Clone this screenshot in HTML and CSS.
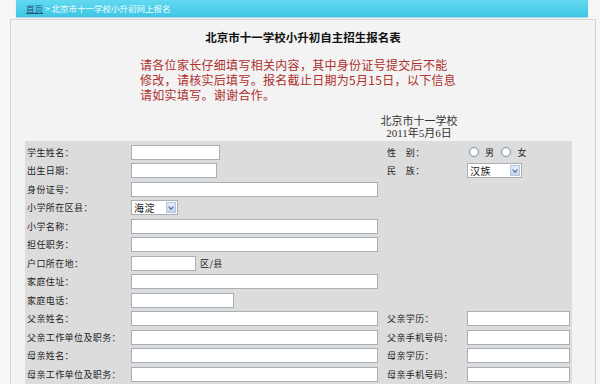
FILE: index.html
```html
<!DOCTYPE html>
<html lang="zh-CN">
<head>
  <meta charset="UTF-8" />
  <title>北京市十一学校小升初网上报名</title>
  <link rel="stylesheet" href="styles.css">
</head>
<body>

  <!-- 导航条 -->
  <div class="crumb"><a href="#">首页</a> &gt; 北京市十一学校小升初网上报名</div>

  <div class="panel">
    <h1 class="title">北京市十一学校小升初自主招生报名表</h1>

    <p class="notice">请各位家长仔细填写相关内容，其中身份证号提交后不能修改，请核实后填写。报名截止日期为5月15日，以下信息请如实填写。谢谢合作。</p>

    <div class="sign">
      <div>北京市十一学校</div>
      <div>2011年5月6日</div>
    </div>

    <!-- 报名表 -->
    <div class="form">
      <div class="row">
        <span class="lab">学生姓名：</span>
        <span class="field"><span class="box w89"></span></span>
        <span class="lab2">性　别：</span>
        <span class="field2">
          <span class="radio"></span><span class="opt">男</span>
          <span class="radio"></span><span class="opt">女</span>
        </span>
      </div>
      <div class="row">
        <span class="lab">出生日期：</span>
        <span class="field"><span class="box w86"></span></span>
        <span class="lab2">民　族：</span>
        <span class="field2"><span class="select w53">汉族<i class="arrow"></i></span></span>
      </div>
      <div class="row">
        <span class="lab">身份证号：</span>
        <span class="field"><span class="box wide"></span></span>
      </div>
      <div class="row">
        <span class="lab">小学所在区县：</span>
        <span class="field"><span class="select w45">海淀<i class="arrow"></i></span></span>
      </div>
      <div class="row">
        <span class="lab">小学名称：</span>
        <span class="field"><span class="box wide"></span></span>
      </div>
      <div class="row">
        <span class="lab">担任职务：</span>
        <span class="field"><span class="box wide"></span></span>
      </div>
      <div class="row">
        <span class="lab">户口所在地：</span>
        <span class="field"><span class="box w65"></span><span class="unit">区/县</span></span>
      </div>
      <div class="row">
        <span class="lab">家庭住址：</span>
        <span class="field"><span class="box wide"></span></span>
      </div>
      <div class="row">
        <span class="lab">家庭电话：</span>
        <span class="field"><span class="box w103"></span></span>
      </div>
      <div class="row">
        <span class="lab">父亲姓名：</span>
        <span class="field"><span class="box wide"></span></span>
        <span class="lab2">父亲学历：</span>
        <span class="field2"><span class="box w103"></span></span>
      </div>
      <div class="row">
        <span class="lab">父亲工作单位及职务：</span>
        <span class="field"><span class="box wide"></span></span>
        <span class="lab2">父亲手机号码：</span>
        <span class="field2"><span class="box w103"></span></span>
      </div>
      <div class="row">
        <span class="lab">母亲姓名：</span>
        <span class="field"><span class="box wide"></span></span>
        <span class="lab2">母亲学历：</span>
        <span class="field2"><span class="box w103"></span></span>
      </div>
      <div class="row">
        <span class="lab">母亲工作单位及职务：</span>
        <span class="field"><span class="box wide"></span></span>
        <span class="lab2">母亲手机号码：</span>
        <span class="field2"><span class="box w103"></span></span>
      </div>
    </div>
  </div>

</body>
</html>
```

FILE: styles.css
```css
body {
  margin: 0;
  background: #f6f6f6;
  font-family: "Noto Sans CJK SC", "Liberation Sans", sans-serif;
  color: #222;
}

/* Breadcrumb bar */
.crumb {
  margin: 0 12px 0 16px;
  height: 17px;
  padding-left: 10px;
  line-height: 17px;
  font-size: 8.5px;
  color: #f2fbfe;
  background: linear-gradient(#62d9f0, #3ec6e4);
  box-shadow: 0 1px 1px #b6dde6;
}
.crumb a {
  color: #234f7c;
}

/* Main panel */
.panel {
  margin: 2px 4px 0 10px;
  height: 380px;
  border: 1px solid #d6d6d6;
  border-right-color: #c9d2d6;
  background: #f3f3f3;
  overflow: hidden;
}

.title {
  margin: 10px 0 0;
  font-size: 11.5px;
  line-height: 14px;
  text-align: center;
  color: #111;
}

.notice {
  width: 318px;
  margin: 13px 0 0 129px;
  font-size: 12px;
  line-height: 15px;
  letter-spacing: 0.3px;
  color: #ad302c;
}

.sign {
  width: 80px;
  margin: 13px 0 0 368px;
  font-family: "Liberation Serif", "Noto Sans CJK SC", serif;
  font-size: 11px;
  line-height: 12px;
  text-align: center;
  color: #333;
}

/* Form */
.form {
  width: 543px;
  margin: 2px 0 0 14px;
  padding: 2px 2px 0;
  background: #dcdcdc;
}
.row {
  display: flex;
  align-items: center;
  height: 18.5px;
  font-size: 9px;
  letter-spacing: 0.4px;
}
.lab {
  width: 104px;
}
.field {
  display: flex;
  align-items: center;
  width: 256px;
}
.lab2 {
  width: 80px;
}
.field2 {
  display: flex;
  align-items: center;
  width: 103px;
}

.box {
  display: inline-block;
  height: 13px;
  border: 1px solid #a7afb6;
  background: #fff;
  box-sizing: content-box;
}
.wide { width: 245px; }
.w89 { width: 87px; }
.w86 { width: 84px; }
.w65 { width: 63px; }
.w103 { width: 101px; }

.unit {
  margin-left: 4px;
}

/* Fake select */
.select {
  position: relative;
  display: inline-block;
  height: 13px;
  padding-left: 2px;
  border: 1px solid #a7afb6;
  background: #fff;
  font-size: 10px;
  line-height: 13px;
}
.w45 { width: 43px; }
.w53 { width: 51px; }
.arrow {
  position: absolute;
  top: 1px;
  right: 1px;
  width: 10px;
  height: 11px;
  background: linear-gradient(#e4edf9, #c3d5ef);
  border: 1px solid #b3c4dc;
  box-sizing: border-box;
}
.arrow::after {
  content: "";
  position: absolute;
  left: 2px;
  top: 2px;
  width: 3px;
  height: 3px;
  border-right: 1.5px solid #4d6185;
  border-bottom: 1.5px solid #4d6185;
  transform: rotate(45deg);
}

/* Radios */
.radio {
  display: inline-block;
  width: 8px;
  height: 8px;
  margin-left: 2px;
  border: 1px solid #7f93a6;
  border-radius: 50%;
  background: radial-gradient(#fff 40%, #e3e8ee);
}
.opt {
  margin: 0 5px 0 6px;
}
```
